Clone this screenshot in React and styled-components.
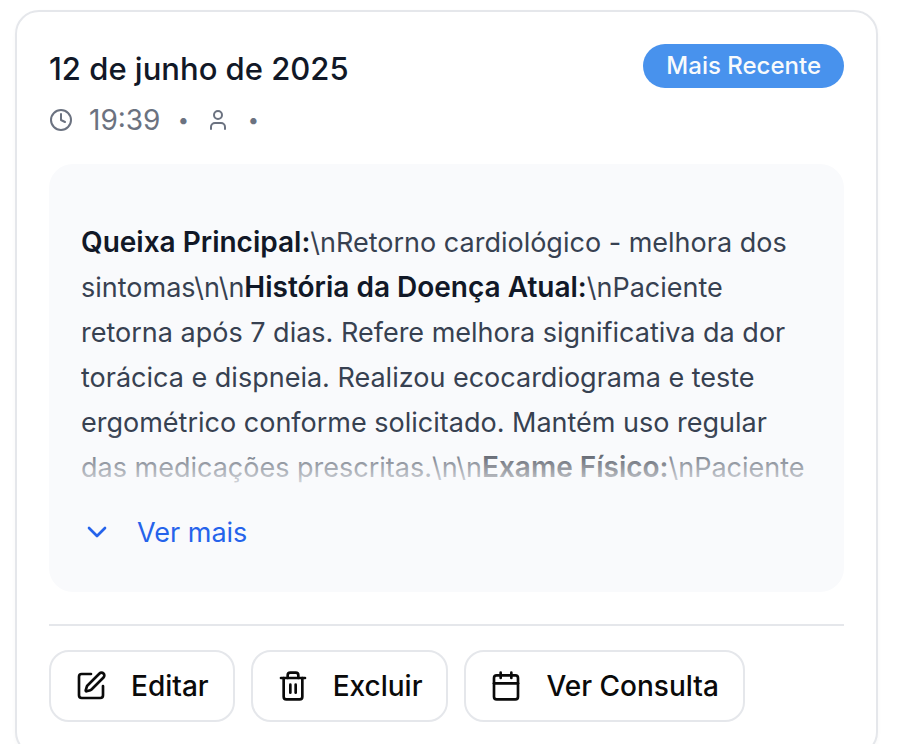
import React, { useState } from "react";
import styled, { createGlobalStyle } from "styled-components";
import { Clock, User, ChevronDown, SquarePen, Trash2, Calendar } from "lucide-react";

const GlobalStyle = createGlobalStyle`
  *, *::before, *::after { box-sizing: border-box; }
  body {
    margin: 0;
    background: #ffffff;
    font-family: Inter, "Liberation Sans", sans-serif;
    -webkit-font-smoothing: antialiased;
  }
`;

const Page = styled.main`
  padding: 10px 28px 0 15px;
`;

const Card = styled.article`
  padding: 32px;
  border: 2px solid #e5e7eb;
  border-radius: 24px;
  background: #ffffff;
  box-shadow: 0 2px 4px rgba(0, 0, 0, 0.03);
`;

const Header = styled.header`
  display: flex;
  align-items: flex-start;
  justify-content: space-between;
  margin-bottom: 22px;
`;

const Title = styled.h2`
  margin: 0 0 4px;
  font-size: 31px;
  font-weight: 500;
  line-height: 50px;
  color: #111827;
`;

const Meta = styled.div`
  display: flex;
  align-items: center;
  gap: 16px;
  font-size: 28px;
  line-height: 44px;
  color: #6b7280;
`;

const Dot = styled.span`
  display: flex;
  justify-content: center;
  width: 14px;
  font-size: 20px;
`;

const Badge = styled.span`
  padding: 0 23px;
  border-radius: 22px;
  background: #4892ed;
  color: #f8fafc;
  font-size: 24px;
  font-weight: 500;
  line-height: 44px;
`;

const Note = styled.section`
  padding: 32px;
  border-radius: 24px;
  background: #f9fafc;
`;

const Excerpt = styled.div`
  position: relative;
  max-height: ${(p) => (p.$open ? "none" : "300px")};
  padding: 24px 0 6px;
  overflow: hidden;

  &::after {
    content: "";
    display: ${(p) => (p.$open ? "none" : "block")};
    position: absolute;
    inset: auto 0 0;
    height: 64px;
    background: linear-gradient(to top, #f9fafc, rgba(249, 250, 252, 0));
  }
`;

const NoteText = styled.p`
  margin: 0;
  font-size: 27px;
  line-height: 45px;
  color: #374151;

  strong {
    font-size: 28px;
    font-weight: 600;
    line-height: 1;
    color: #111827;
  }
`;

const MoreButton = styled.button`
  display: flex;
  align-items: center;
  gap: 24px;
  height: 56px;
  margin-top: 8px;
  padding: 0;
  border: 0;
  background: none;
  color: #2563eb;
  font: inherit;
  font-size: 27px;
  cursor: pointer;
`;

const Actions = styled.footer`
  display: flex;
  flex-wrap: wrap;
  gap: 16px;
  margin-top: 32px;
  padding-top: 24px;
  border-top: 2px solid #e5e7eb;
`;

const ActionButton = styled.button`
  display: flex;
  align-items: center;
  gap: 24px;
  height: 72px;
  padding: 0 24px;
  border: 2px solid #e5e7eb;
  border-radius: 20px;
  background: #ffffff;
  color: #0a0a0a;
  font: inherit;
  font-size: 28px;
  font-weight: 500;
  white-space: nowrap;
  cursor: pointer;
`;

const actions = [
  { label: "Editar", Icon: SquarePen },
  { label: "Excluir", Icon: Trash2 },
  { label: "Ver Consulta", Icon: Calendar },
];

export default function App() {
  const [open, setOpen] = useState(false);
  return (
    <>
      <GlobalStyle />
      <Page>
        <Card>
          <Header>
            <div>
              <Title>12 de junho de 2025</Title>
              <Meta>
                <Clock size={24} />
                <time dateTime="19:39">19:39</time>
                <Dot>•</Dot>
                <User size={24} />
                <Dot>•</Dot>
              </Meta>
            </div>
            <Badge>Mais Recente</Badge>
          </Header>
          <Note>
            <Excerpt $open={open}>
              <NoteText>
                <strong>Queixa Principal:</strong>
                {"\\nRetorno cardiológico - melhora dos sintomas\\n\\n"}
                <strong>História da Doença Atual:</strong>
                {"\\nPaciente retorna após 7 dias. Refere melhora significativa da dor torácica e dispneia. Realizou ecocardiograma e teste ergométrico conforme solicitado. Mantém uso regular das medicações prescritas.\\n\\n"}
                <strong>Exame Físico:</strong>
                {"\\nPaciente"}
              </NoteText>
            </Excerpt>
            <MoreButton type="button" aria-expanded={open} onClick={() => setOpen(!open)}>
              <ChevronDown size={32} />
              {open ? "Ver menos" : "Ver mais"}
            </MoreButton>
          </Note>
          <Actions>
            {actions.map(({ label, Icon }) => (
              <ActionButton type="button" key={label}>
                <Icon size={32} />
                {label}
              </ActionButton>
            ))}
          </Actions>
        </Card>
      </Page>
    </>
  );
}
